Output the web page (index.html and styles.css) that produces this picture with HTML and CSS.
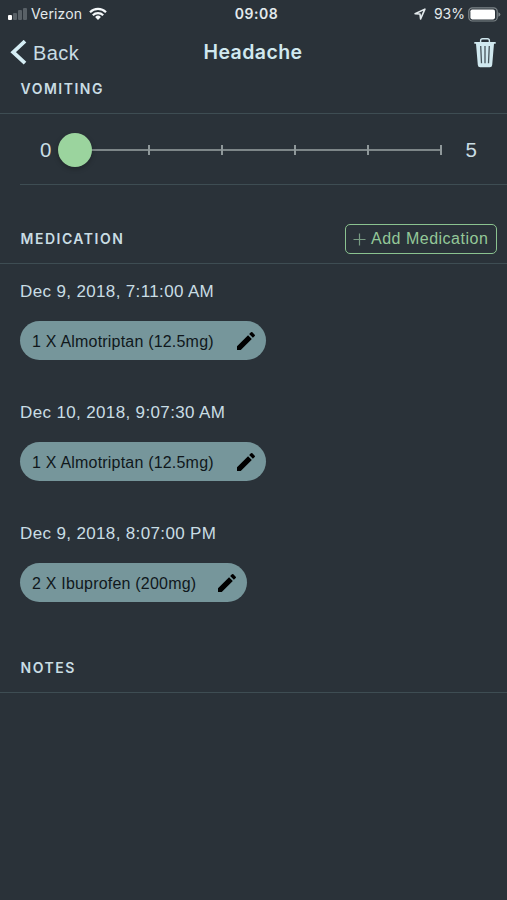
FILE: index.html
```html
<!DOCTYPE html>
<html lang="en">
<head>
<meta charset="utf-8">
<title>Headache</title>
<link rel="stylesheet" href="styles.css">
</head>
<body>
<div class="status">
  <div class="status-left">
    <span class="bars"><i class="on"></i><i></i><i></i><i></i></span>
    <span class="carrier">Verizon</span>
    <svg class="wifi" width="18" height="14" viewBox="0 0 18 14" fill="none" stroke="#f4f8fa" stroke-width="2.2"><path d="M1 5.2a11.4 11.4 0 0 1 16 0M3.8 8.2a7.4 7.4 0 0 1 10.4 0"/><path d="M9 12.9 6.1 10a4.2 4.2 0 0 1 5.8 0z" fill="#f4f8fa" stroke="none"/></svg>
  </div>
  <span class="clock">09:08</span>
  <div class="status-right">
    <svg class="loc" width="12" height="12" viewBox="0 0 12 12" fill="none" stroke="#e3eaed" stroke-width="1.6" stroke-linejoin="round"><path d="M1.1 5.8 10.9 1.1 6.6 10.9 6 6z"/></svg>
    <span class="percent">93%</span>
    <svg class="battery" width="33" height="15" viewBox="0 0 33 15"><rect x=".8" y=".8" width="28.4" height="13.2" rx="3.6" fill="none" stroke="#7d8589" stroke-width="1.2"/><rect x="2.4" y="2.4" width="24.6" height="10" rx="1.8" fill="#fff"/><path d="M30.4 5.2q2 .8 2 2.3t-2 2.3z" fill="#7d8589"/></svg>
  </div>
</div>
<header class="nav">
  <div class="back">
    <svg width="17" height="26" viewBox="0 0 17 26" fill="none" stroke="#d5edf4" stroke-width="3.8"><path d="M15 1.2 3.200 12.200 15 23.200"/></svg>
    <span>Back</span>
  </div>
  <h1>Headache</h1>
  <svg class="trash" width="22" height="31" viewBox="0 0 22 31"><path d="M6.6 5.200V3.700Q6.600 1.700 8.600 1.700h4.800q2 0 2 2v1.500" fill="none" stroke="#d0e8ef" stroke-width="1.400"/><path d="M.3 5h21.400v1.700H20L18.200 28q-.2 2.200-2.400 2.200H6.200Q4 30.200 3.800 28L2 6.700H.3z" fill="#d0e8ef"/><path d="m6.700 9 .8 17.300M11 9v17.300M15.300 9l-.8 17.300" fill="none" stroke="#47545b" stroke-width="1.300"/></svg>
</header>
<section>
  <div class="head head-vomiting"><h2>VOMITING</h2></div>
  <div class="range">
    <span class="min">0</span>
    <div class="track"><b></b><i></i><i></i><i></i><i></i><i></i></div>
    <span class="max">5</span>
  </div>
</section>
<section>
  <div class="head head-med">
    <h2>MEDICATION</h2>
    <button class="add"><svg width="13" height="13" viewBox="0 0 13 13" stroke="#789b83" stroke-width="1.2"><path d="M6.500.5v12M.5 6.500h12"/></svg><span>Add Medication</span></button>
  </div>
  <div class="entry">
    <time>Dec 9, 2018, 7:11:00 AM</time>
    <div class="chip"><span>1 X Almotriptan (12.5mg)</span><svg width="24" height="24" viewBox="0 0 24 24"><path d="M3 17.250V21h3.750L17.810 9.940l-3.750-3.750L3 17.250zM20.710 7.040a1 1 0 0 0 0-1.410l-2.340-2.340a1 1 0 0 0-1.410 0l-1.830 1.830 3.750 3.750 1.830-1.830z"/></svg></div>
  </div>
  <div class="entry">
    <time>Dec 10, 2018, 9:07:30 AM</time>
    <div class="chip"><span>1 X Almotriptan (12.5mg)</span><svg width="24" height="24" viewBox="0 0 24 24"><path d="M3 17.250V21h3.750L17.810 9.940l-3.750-3.750L3 17.250zM20.710 7.040a1 1 0 0 0 0-1.410l-2.340-2.340a1 1 0 0 0-1.410 0l-1.830 1.830 3.750 3.750 1.830-1.830z"/></svg></div>
  </div>
  <div class="entry">
    <time>Dec 9, 2018, 8:07:00 PM</time>
    <div class="chip chip-ibu"><span>2 X Ibuprofen (200mg)</span><svg width="24" height="24" viewBox="0 0 24 24"><path d="M3 17.250V21h3.750L17.810 9.940l-3.750-3.750L3 17.250zM20.710 7.040a1 1 0 0 0 0-1.410l-2.340-2.340a1 1 0 0 0-1.410 0l-1.830 1.830 3.750 3.750 1.830-1.830z"/></svg></div>
  </div>
</section>
<section>
  <div class="head head-notes"><h2>NOTES</h2></div>
</section>
</body>
</html>
```

FILE: styles.css
```css
* { box-sizing: border-box; }
body {
  margin: 0;
  height: 900px;
  overflow: hidden;
  background: #2a3239;
  color: #c9dde4;
  font-family: "Liberation Sans", Arial, sans-serif;
}
h1, h2 { margin: 0; font-family: Inter, sans-serif; font-weight: 600; }
svg { display: block; flex: none; }
.status, .nav { display: grid; grid-template-columns: 1fr auto 1fr; align-items: center; }
.status { height: 28px; padding: 0 6px 0 8px; font: 14px/18px Inter, sans-serif; color: #e3eaed; }
.status-left, .status-right { display: flex; align-items: center; }
.status-right { justify-content: flex-end; }
.bars { display: flex; align-items: flex-end; gap: 1px; height: 12px; margin-right: 4px; }
.bars i { width: 4px; height: 12px; border-radius: 1px; background: #596167; }
.bars i:nth-child(1) { height: 5px; }
.bars i:nth-child(2) { height: 7px; }
.bars i:nth-child(3) { height: 10px; }
.bars .on { background: #fff; }
.carrier { letter-spacing: .15px; }
.wifi { margin-left: 7px; }
.clock { padding-left: 4px; font-weight: 600; letter-spacing: .5px; }
.loc { margin-right: 8px; }
.percent { margin-right: 3px; }
.nav { height: 49px; padding: 0 11px 0 10px; }
.back { display: flex; align-items: center; gap: 6px; font-size: 20px; letter-spacing: .4px; }
.back span { padding-top: 2px; }
.nav h1 { font-size: 19.5px; line-height: 24px; letter-spacing: .4px; padding-bottom: 1px; color: #d0e8ef; }
.trash { justify-self: end; }
.head { display: flex; align-items: center; border-bottom: 1px solid #3e4d53; }
.head h2 { padding-left: 20.5px; font-size: 14px; line-height: 18px; letter-spacing: 1.5px; }
.head-vomiting { height: 37px; padding-bottom: 12px; }
.range {
  display: flex;
  align-items: center;
  height: 71px;
  margin-left: 20px;
  padding: 2px 28px 0 20px;
  border-bottom: 1px solid #3e4d53;
  font-size: 20.5px;
}
.track { position: relative; display: flex; justify-content: space-between; align-items: center; width: 366px; height: 36px; margin: 0 24px; background: linear-gradient(#7d8688, #7d8688) center / 100% 2px no-repeat; }
.track b { width: 34px; height: 34px; margin: 0 -17px; border-radius: 50%; background: #9bd49e; box-shadow: 0 2px 5px rgba(0,0,0,.25); z-index: 1; }
.track i { width: 2px; height: 10px; margin: 0 -1px; background: #8f989a; }
.head-med { justify-content: space-between; height: 79px; padding: 29px 10px 0 0; }
.add {
  display: flex;
  align-items: center;
  gap: 5px;
  width: 152px;
  height: 30px;
  padding: 1px 0 0 7px;
  border: 1.5px solid #8ac28f;
  border-radius: 5px;
  background: none;
  color: #94c898;
  font: 16px/20px "Liberation Sans", Arial, sans-serif;
  letter-spacing: .5px;
  white-space: nowrap;
}
.entry { height: 121px; padding: 18px 20px 0; }
.entry time { display: block; font-size: 17px; line-height: 20px; letter-spacing: .36px; }
.chip {
  display: flex;
  align-items: center;
  justify-content: space-between;
  width: 246px;
  height: 39px;
  margin-top: 19px;
  padding: 0 8px 0 12px;
  border-radius: 20px;
  background: #76969b;
  color: #10181c;
  font-size: 16px;
  letter-spacing: .2px;
  white-space: nowrap;
}
.chip span { padding-top: 2px; }
.chip-ibu { width: 227px; }
.head-notes { height: 66px; padding-top: 17px; }
```
